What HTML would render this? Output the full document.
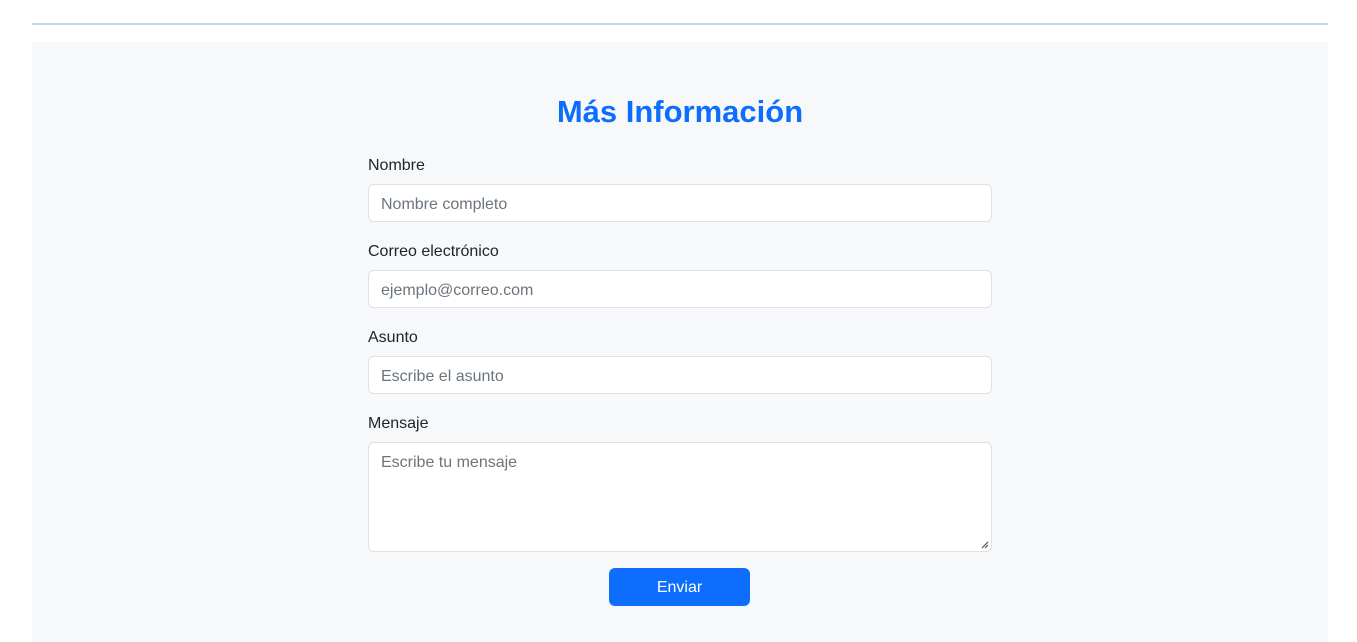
<!DOCTYPE html>
<html><head><style>
body{margin:0;background:#fff;font-family:"Liberation Sans",sans-serif;width:1357px;height:638px;overflow:hidden;position:relative}
.line{position:absolute;left:32px;top:23px;width:1296px;height:2px;background:#c0d8fb}
.sec{position:absolute;left:32px;top:42px;width:1296px;height:600px;background:#f7f8fa}
h1{position:absolute;left:0;width:1357px;top:92px;margin:0;text-align:center;color:#0d6efd;font-size:31px;font-weight:bold;line-height:40px;padding-left:3px;box-sizing:border-box}
.l{position:absolute;left:368px;font-size:16px;color:#212529;line-height:20px}
.i{position:absolute;left:368px;width:622px;height:36px;background:#fff;border:1px solid #dee2e6;border-radius:6px;box-sizing:content-box}
.i span{position:absolute;left:12px;top:10px;font-size:16px;color:#6c757d;line-height:20px}
.btn{position:absolute;left:609px;top:568px;width:141px;height:38px;background:#0d6efd;border-radius:6px;color:#fff;font-size:16px;text-align:center;line-height:40px}
</style></head><body>
<div class="line"></div>
<div class="sec"></div>
<h1>Más Información</h1>
<div class="l" style="top:156px">Nombre</div>
<div class="i" style="top:184px"><span>Nombre completo</span></div>
<div class="l" style="top:242px">Correo electrónico</div>
<div class="i" style="top:270px"><span>ejemplo@correo.com</span></div>
<div class="l" style="top:328px">Asunto</div>
<div class="i" style="top:356px"><span>Escribe el asunto</span></div>
<div class="l" style="top:414px">Mensaje</div>
<div class="i" style="top:442px;height:108px"><span>Escribe tu mensaje</span>
<svg style="position:absolute;right:2px;bottom:2px" width="8" height="8"><path d="M1 7L7 1M4 7L7 4" stroke="#555" stroke-width="1.2"/></svg></div>
<div class="btn">Enviar</div>
</body></html>
